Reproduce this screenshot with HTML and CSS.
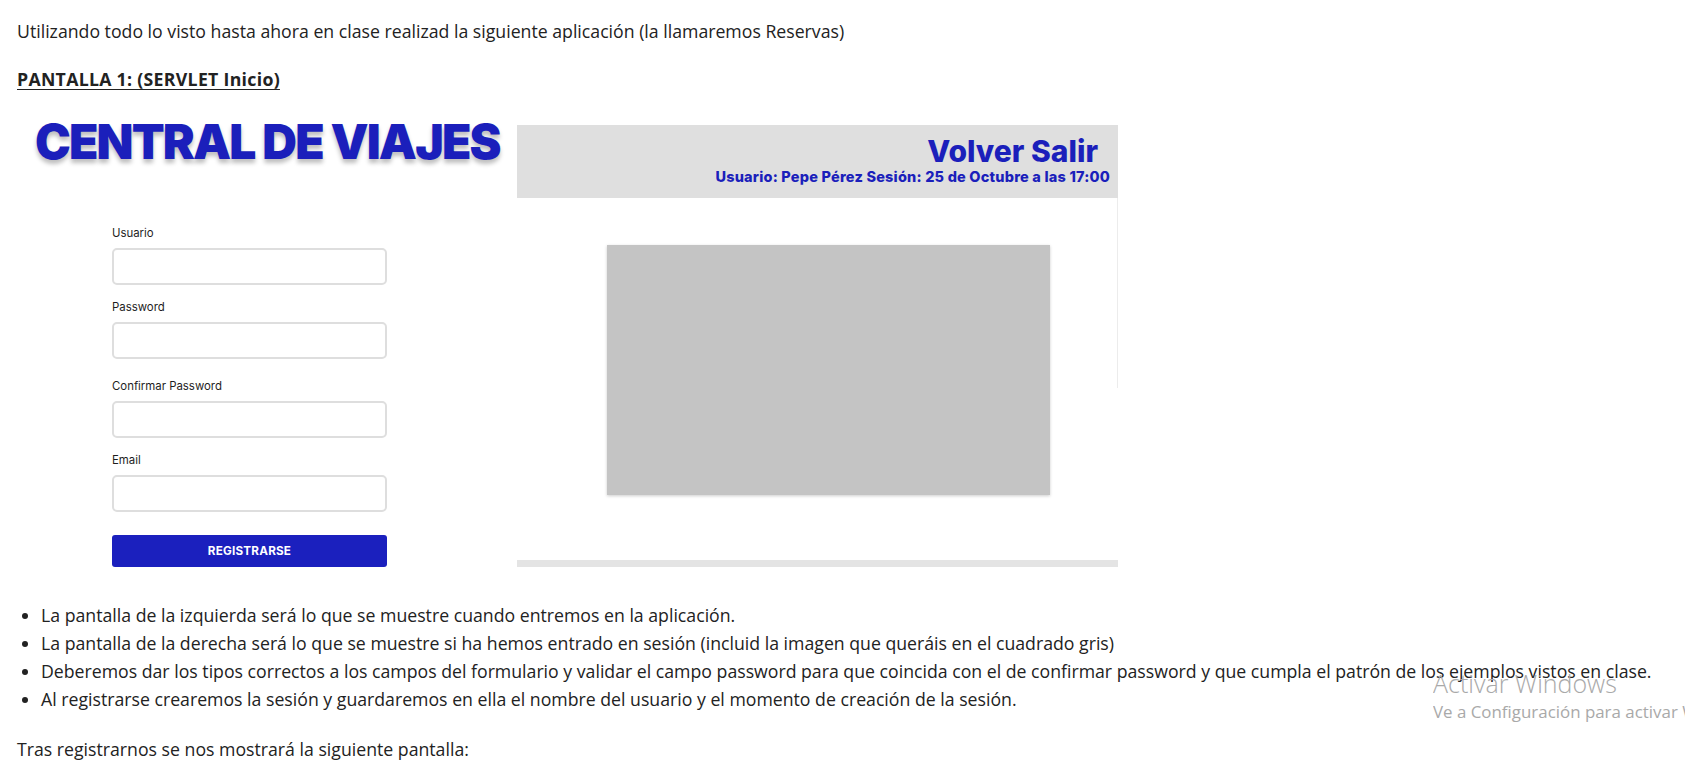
FILE: index.html
```html
<!DOCTYPE html>
<html lang="es">
<head>
<meta charset="utf-8">
<title>Reservas</title>
<link rel="stylesheet" href="styles.css">
</head>
<body>
<main class="doc">
  <p class="intro">Utilizando todo lo visto hasta ahora en clase realizad la siguiente aplicación (la llamaremos Reservas)</p>
  <p class="heading">PANTALLA 1: (SERVLET Inicio)</p>

  <section class="mockup">
    <div class="login">
      <h1 class="brand">CENTRAL DE VIAJES</h1>
      <form class="form">
        <label class="field">
          <span class="field-label">Usuario</span>
          <span class="field-input"></span>
        </label>
        <label class="field">
          <span class="field-label">Password</span>
          <span class="field-input"></span>
        </label>
        <label class="field field-wide">
          <span class="field-label">Confirmar Password</span>
          <span class="field-input"></span>
        </label>
        <label class="field">
          <span class="field-label">Email</span>
          <span class="field-input"></span>
        </label>
        <span class="btn">REGISTRARSE</span>
      </form>
    </div>

    <div class="session">
      <header class="session-head">
        <div class="session-links">Volver Salir</div>
        <div class="session-info">Usuario: Pepe Pérez Sesión: 25 de Octubre a las 17:00</div>
      </header>
      <div class="session-body">
        <div class="photo"></div>
      </div>
      <div class="session-foot"></div>
    </div>
  </section>

  <ul class="points">
    <li>La pantalla de la izquierda será lo que se muestre cuando entremos en la aplicación.</li>
    <li>La pantalla de la derecha será lo que se muestre si ha hemos entrado en sesión (incluid la imagen que queráis en el cuadrado gris)</li>
    <li>Deberemos dar los tipos correctos a los campos del formulario y validar el campo password para que coincida con el de confirmar password y que cumpla el patrón de los ejemplos vistos en clase.</li>
    <li>Al registrarse crearemos la sesión y guardaremos en ella el nombre del usuario y el momento de creación de la sesión.</li>
  </ul>
  <p class="outro">Tras registrarnos se nos mostrará la siguiente pantalla:</p>
</main>

<div class="watermark">
  <div class="wm-title">Activar Windows</div>
  <div class="wm-sub">Ve a Configuración para activar Windows.</div>
</div>
</body>
</html>
```

FILE: styles.css
```css
html, body {
  margin: 0;
  padding: 0;
  overflow: hidden;
  background: #ffffff;
}

body {
  font-family: "Open Sans", "Noto Sans", sans-serif;
  font-size: 17.7px;
  color: #222222;
  width: 1685px;
  height: 764px;
  position: relative;
}

.doc {
  padding: 19px 17px 0 17px;
}

.intro {
  margin: 0;
  line-height: 24px;
}

.heading {
  margin: 24px 0 0 0;
  line-height: 24px;
  font-weight: 700;
  letter-spacing: 0.3px;
  text-decoration: underline;
  text-underline-offset: 3px;
}

/* mockup */
.mockup {
  margin-top: 27px;
  display: flex;
  align-items: flex-start;
}

.login {
  width: 500px;
  font-family: "Inter", sans-serif;
}

.brand {
  margin: 0;
  padding-left: 18px;
  font-family: "Inter", sans-serif;
  font-weight: 900;
  font-size: 48px;
  line-height: 48px;
  color: #1b1fbb;
  letter-spacing: -1.85px;
  text-shadow: 0 4px 4px rgba(0, 0, 0, 0.25);
  white-space: nowrap;
}

.form {
  margin: 60px 0 0 95px;
  width: 275px;
  display: flex;
  flex-direction: column;
}

.field {
  display: flex;
  flex-direction: column;
  gap: 8px;
  margin-bottom: 15px;
}

.field-wide {
  margin-top: 5px;
}

.field-label {
  font-size: 11.4px;
  line-height: 14px;
  color: #1e1e1e;
}

.field-input {
  display: block;
  height: 37px;
  box-sizing: border-box;
  border: 2px solid #dedede;
  border-radius: 5px;
  background: #fff;
}

.btn {
  margin-top: 8px;
  height: 32px;
  border-radius: 3px;
  background: #1b20be;
  color: #fff;
  font-weight: 700;
  font-size: 11.7px;
  display: flex;
  align-items: center;
  justify-content: center;
  letter-spacing: 0.2px;
}

.session {
  width: 601px;
  margin-top: 7px;
  font-family: "Inter", sans-serif;
  color: #1b1fbb;
}

.session-head {
  height: 73px;
  box-sizing: border-box;
  background: #dfdfdf;
  padding: 11px 8px 0 0;
  display: flex;
  flex-direction: column;
  align-items: flex-end;
  gap: 3px;
}

.session-links {
  font-weight: 800;
  font-size: 30px;
  line-height: 30px;
  margin-right: 12px;
}

.session-info {
  font-weight: 800;
  font-size: 14.5px;
  line-height: 15px;
  letter-spacing: 0.2px;
}

.session-body {
  height: 362px;
  box-sizing: border-box;
  padding: 47px 0 0 90px;
  background: linear-gradient(#ececec, #ececec) right top / 1px 190px no-repeat;
}

.photo {
  width: 443px;
  height: 250px;
  background: #c4c4c4;
  box-shadow: 0 1px 3px rgba(0, 0, 0, 0.2);
}

.session-foot {
  height: 7px;
  background: #e4e4e4;
}

/* list */
.points {
  margin: 35px 0 0 0;
  padding-left: 24px;
  line-height: 27.9px;
}

.outro {
  margin: 23px 0 0 0;
  line-height: 24px;
}

/* windows activation overlay */
.watermark {
  position: absolute;
  left: 1433px;
  right: 0;
  top: 667px;
  overflow: hidden;
  white-space: nowrap;
  font-family: "Open Sans", sans-serif;
  color: #a9a9a9;
}

.wm-title {
  font-size: 25px;
  font-weight: 300;
  line-height: 32px;
}

.wm-sub {
  font-size: 16.9px;
  line-height: 26px;
}
```
